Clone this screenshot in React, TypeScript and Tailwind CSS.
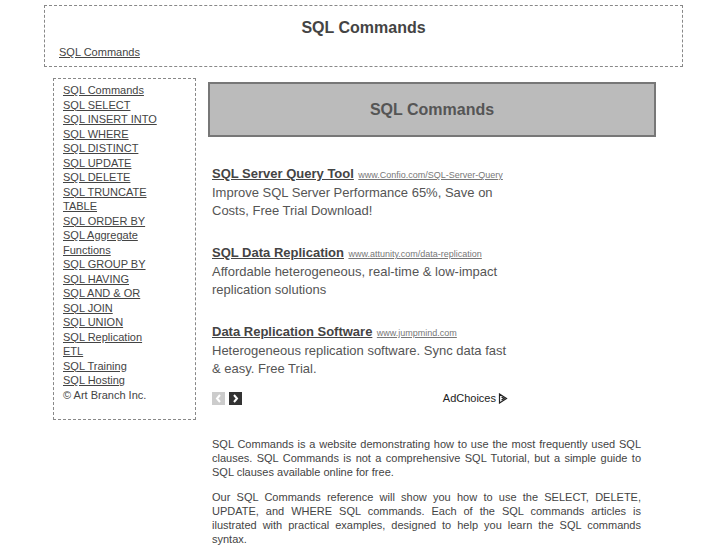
import React from "react";

const links = [
  "SQL Commands",
  "SQL SELECT",
  "SQL INSERT INTO",
  "SQL WHERE",
  "SQL DISTINCT",
  "SQL UPDATE",
  "SQL DELETE",
  "SQL TRUNCATE TABLE",
  "SQL ORDER BY",
  "SQL Aggregate Functions",
  "SQL GROUP BY",
  "SQL HAVING",
  "SQL AND & OR",
  "SQL JOIN",
  "SQL UNION",
  "SQL Replication ETL",
  "SQL Training",
  "SQL Hosting",
];

const ads = [
  {
    title: "SQL Server Query Tool",
    url: "www.Confio.com/SQL-Server-Query",
    text: "Improve SQL Server Performance 65%, Save on Costs, Free Trial Download!",
  },
  {
    title: "SQL Data Replication",
    url: "www.attunity.com/data-replication",
    text: "Affordable heterogeneous, real-time & low-impact replication solutions",
  },
  {
    title: "Data Replication Software",
    url: "www.jumpmind.com",
    text: "Heterogeneous replication software. Sync data fast & easy. Free Trial.",
  },
];

export default function App() {
  return (
    <div className="min-h-[545px] bg-white font-['Liberation_Sans',Arial,sans-serif] text-[#444]">
      <div className="mx-auto w-[639px] pt-[5px]">
        {/* header */}
        <div className="h-[62px] border border-dashed border-[#888] px-[14px] pt-[12px]">
          <h1 className="text-center text-[16px] font-bold leading-[20px] text-[#444]">SQL Commands</h1>
          <a href="#" className="mt-[8px] block text-[11px] leading-[13px] text-[#444] underline">
            SQL Commands
          </a>
        </div>

        <div className="mt-[11px] flex">
          {/* sidebar */}
          <div className="ml-[9px] h-[342px] w-[143px] shrink-0 border border-dashed border-[#888] pl-[9px] pt-[4px]">
            <ul className="w-[100px] text-[11px] leading-[14.5px]">
              {links.map((l) => (
                <li key={l}>
                  <a href="#" className="text-[#444] underline">
                    {l}
                  </a>
                </li>
              ))}
              <li className="text-[#444]">© Art Branch Inc.</li>
            </ul>
          </div>

          {/* main */}
          <div className="ml-[12px] w-[448px]">
            <div className="mt-[4px] flex h-[55px] items-center justify-center border-2 border-[#777] bg-[#bbb]">
              <h2 className="text-[16px] font-bold text-[#555]">SQL Commands</h2>
            </div>

            <div className="mt-[27px] pl-[4px]">
              {ads.map((a) => (
                <div key={a.title} className="mb-[23px] w-[300px]">
                  <div className="leading-[18px]">
                    <a href="#" className="text-[13px] font-bold text-[#444] underline">
                      {a.title}
                    </a>{" "}
                    <a href="#" className="text-[9px] text-[#777] underline">
                      {a.url}
                    </a>
                  </div>
                  <p className="text-[13px] leading-[18px] text-[#555]">{a.text}</p>
                </div>
              ))}
              <div className="-mt-[11px] flex w-[296px] items-center justify-between">
                <div className="flex gap-[4px]">
                  <span className="flex h-[13px] w-[13px] items-center justify-center bg-[#ccc]">
                    <svg width="7" height="9" viewBox="0 0 7 9">
                      <path d="M5 1 L2 4.5 L5 8" stroke="#fff" strokeWidth="2" fill="none" />
                    </svg>
                  </span>
                  <span className="flex h-[13px] w-[13px] items-center justify-center bg-[#333]">
                    <svg width="7" height="9" viewBox="0 0 7 9">
                      <path d="M2 1 L5 4.5 L2 8" stroke="#fff" strokeWidth="2" fill="none" />
                    </svg>
                  </span>
                </div>
                <span className="flex items-center gap-[2px] text-[11px] text-[#222]">
                  AdChoices
                  <svg width="10" height="11" viewBox="0 0 10 11">
                    <path d="M1.5 1 L8.5 5.5 L1.5 10 Z M3.5 4 L6 5.5 L3.5 7" stroke="#222" strokeWidth="1.2" fill="none" />
                  </svg>
                </span>
              </div>
            </div>

            <div className="mt-[30px] pl-[4px] pr-[15px] text-justify text-[11px] leading-[14px] text-[#444]">
              <p>
                SQL Commands is a website demonstrating how to use the most frequently used SQL clauses. SQL
                Commands is not a comprehensive SQL Tutorial, but a simple guide to SQL clauses available online
                for free.
              </p>
              <p className="mt-[11px]">
                Our SQL Commands reference will show you how to use the SELECT, DELETE, UPDATE, and WHERE SQL
                commands. Each of the SQL commands articles is ilustrated with practical examples, designed to help
                you learn the SQL commands syntax.
              </p>
            </div>
          </div>
        </div>
      </div>
    </div>
  );
}
